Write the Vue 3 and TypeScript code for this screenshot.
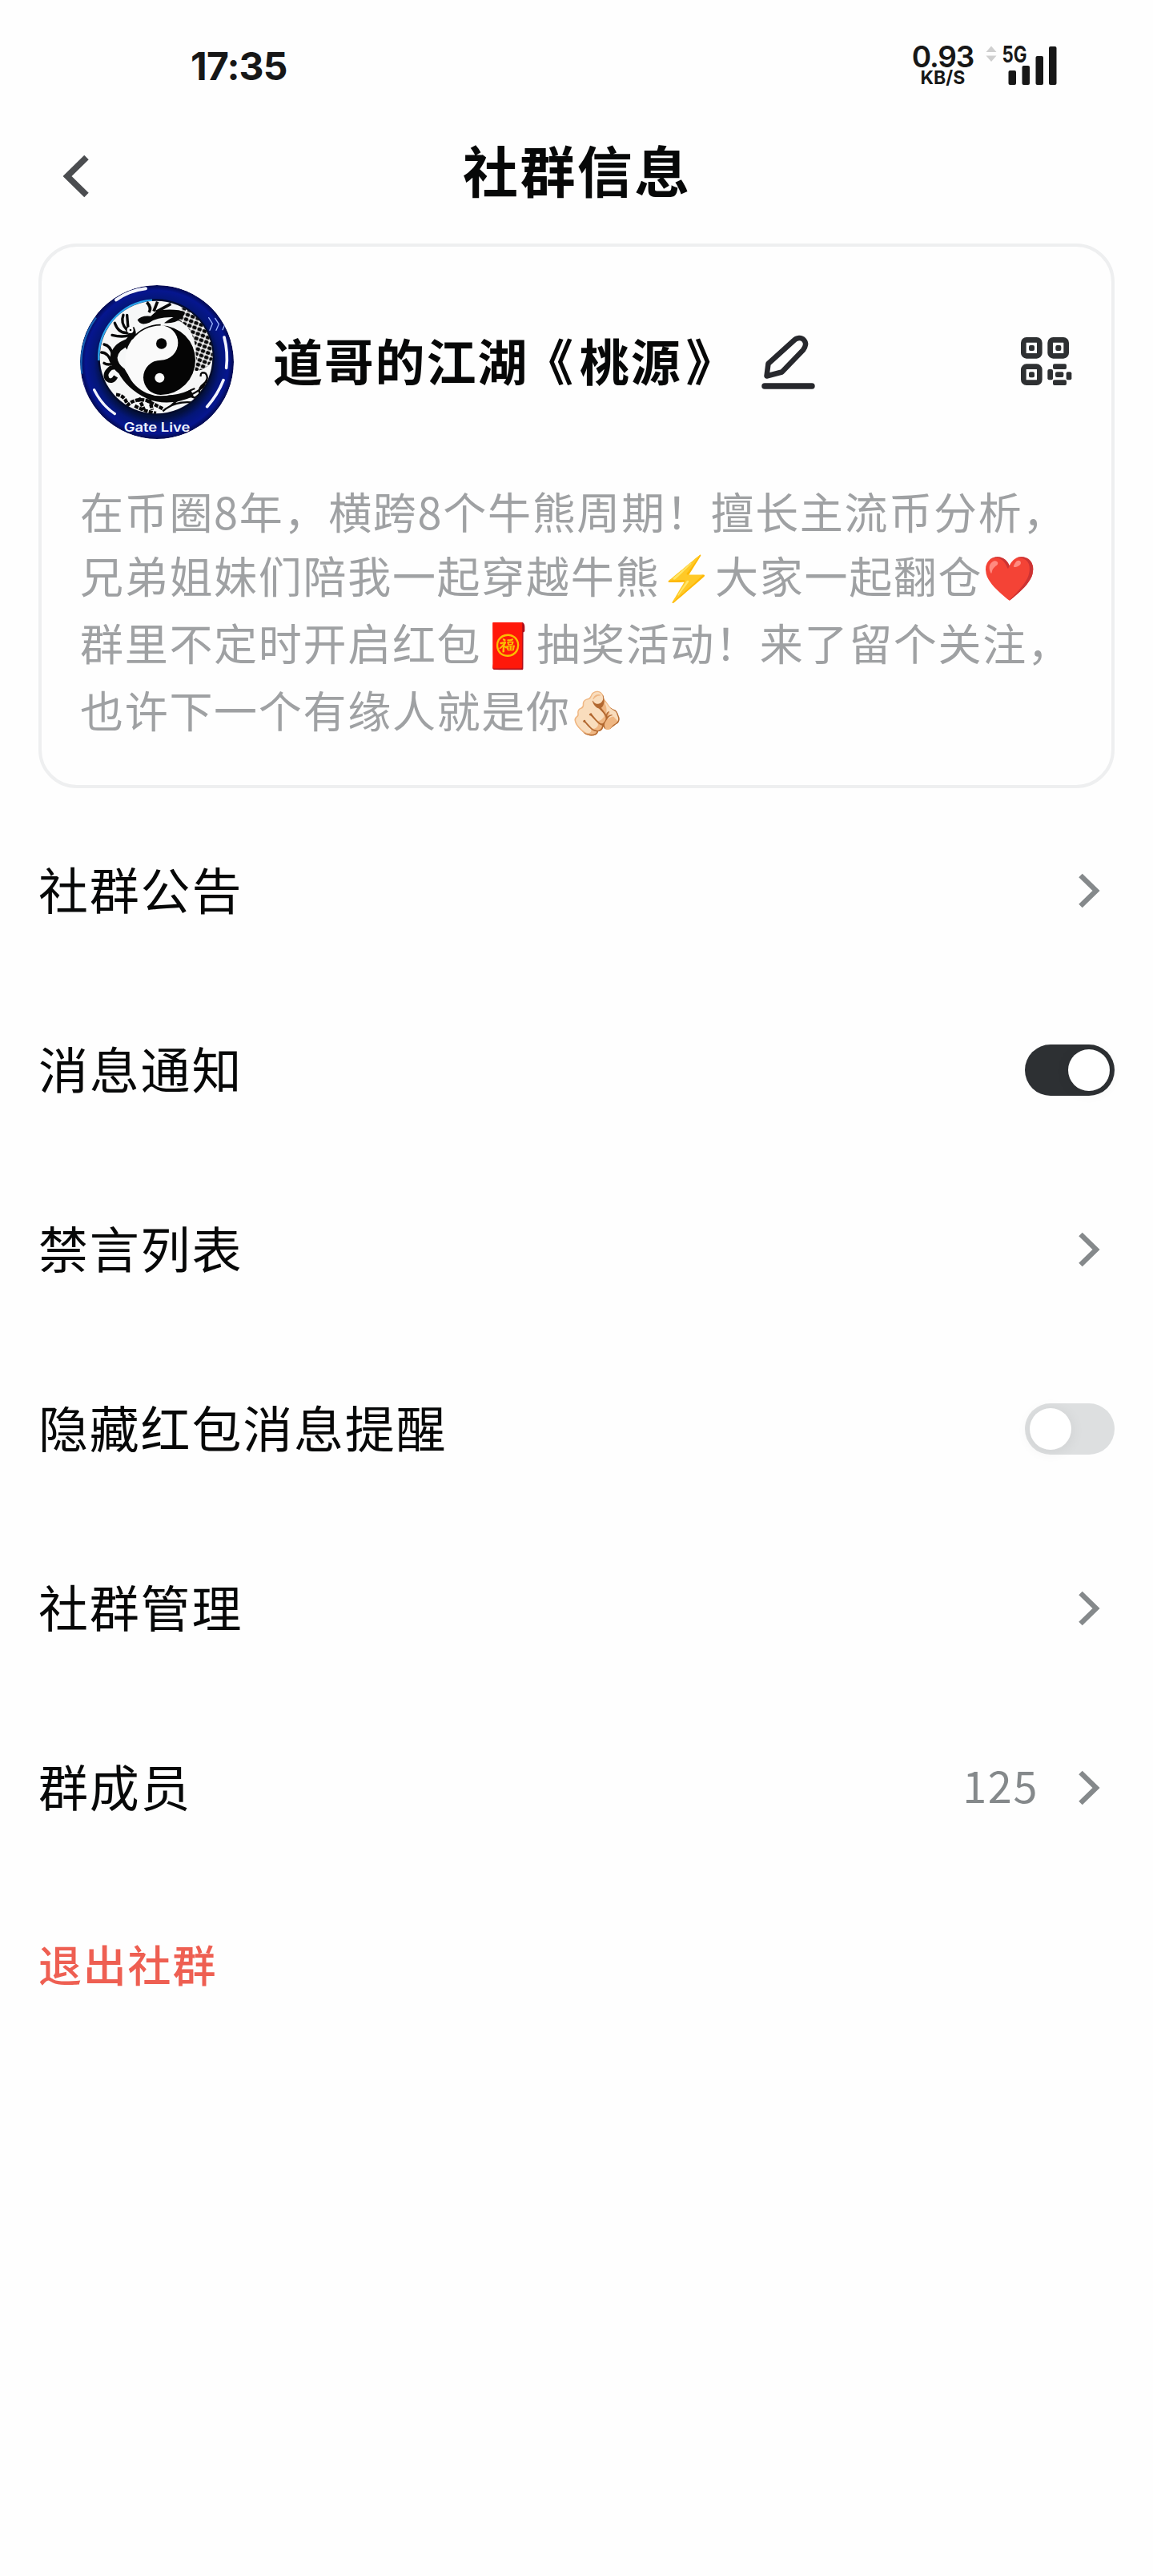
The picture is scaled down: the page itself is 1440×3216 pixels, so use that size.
<script setup lang="ts">
interface Row {
  label: string
  kind: 'link' | 'switch'
  on?: boolean
  value?: string
}

const rows: Row[] = [
  { label: '社群公告', kind: 'link' },
  { label: '消息通知', kind: 'switch', on: true },
  { label: '禁言列表', kind: 'link' },
  { label: '隐藏红包消息提醒', kind: 'switch', on: false },
  { label: '社群管理', kind: 'link' },
  { label: '群成员', kind: 'link', value: '125' },
]
</script>

<template>
  <main class="page">
    <div class="status">
      <span class="time">17:35</span>
      <div class="status-right">
        <div class="speed">
          <span class="speed-num">0.93</span>
          <span class="speed-unit">KB/S</span>
        </div>
        <svg class="signal" width="90" height="62" viewBox="1231 46 90 62">
          <path d="M1238 57.5l6.5 7.5h-13zM1238 77l6.5-7.5h-13z" fill="#cfcfcf" />
          <text x="1251.5" y="77.6" class="net" textLength="31" lengthAdjust="spacingAndGlyphs">5G</text>
          <g fill="#171717">
            <rect x="1259.5" y="88" width="9.5" height="18" rx="2" />
            <rect x="1276.5" y="82" width="9.5" height="24" rx="2" />
            <rect x="1293.5" y="70" width="9.5" height="36" rx="2" />
            <rect x="1310" y="58" width="9.5" height="48" rx="2" />
          </g>
        </svg>
      </div>
    </div>

    <header class="nav">
      <svg class="back" width="34" height="54" viewBox="0 0 34 54">
        <path d="M29 3.5L5 27L29 50.5" fill="none" stroke="#4b4d50" stroke-width="7.8" />
      </svg>
      <h1>社群信息</h1>
    </header>

    <section class="card">
      <div class="card-head">
        <svg class="avatar" width="192" height="192" viewBox="60 48 576 576">
          <defs>
            <radialGradient id="ring" cx="50%" cy="50%" r="50%">
              <stop offset="0.72" stop-color="#03103c" />
              <stop offset="0.82" stop-color="#041678" />
              <stop offset="0.93" stop-color="#06168f" />
              <stop offset="1" stop-color="#040a4e" />
            </radialGradient>
            <clipPath id="disc"><circle cx="345" cy="318" r="212" /></clipPath>
            <clipPath id="outer"><circle cx="348" cy="336" r="288" /></clipPath>
            <pattern id="scales" width="20" height="18" patternUnits="userSpaceOnUse" patternTransform="rotate(20)">
              <rect width="20" height="18" fill="#eee" />
              <rect x="2" y="2" width="16" height="14" rx="5" fill="#0a0a0a" />
            </pattern>
          </defs>
          <g clip-path="url(#outer)">
            <circle cx="348" cy="336" r="288" fill="url(#ring)" />
            <path d="M72 400Q100 540 200 590L150 600L60 480z" fill="#5a55b8" opacity=".45" />
            <path d="M67 380A288 288 0 0 1 120 170" fill="none" stroke="#1d77c8" stroke-width="7" opacity=".8" />
            <circle cx="345" cy="318" r="218" fill="#020b2c" />
            <path d="M130 330A216 216 0 0 1 330 104" fill="none" stroke="#2aa4ee" stroke-width="7" />
            <circle cx="345" cy="318" r="211" fill="#f6f7f7" />
            <g clip-path="url(#disc)">
              <path d="M440 130Q540 170 570 300L545 345Q520 370 488 370Q505 270 470 215Q445 185 425 180z" fill="url(#scales)" />
              <path d="M275 178Q290 160 325 164L345 146Q380 136 430 142Q465 150 440 170Q420 192 375 190Q395 174 410 168Q350 166 320 188Q285 202 275 178z" fill="#080808" />
              <path d="M310 112Q330 132 318 150M350 110L336 146M400 118L345 148" fill="none" stroke="#080808" stroke-width="11" />
              <path d="M250 210Q265 238 240 262Q190 280 186 320Q188 350 216 370Q245 425 315 460Q390 492 480 452" fill="none" stroke="#080808" stroke-width="27" />
              <path d="M222 160Q210 190 236 216M190 190Q205 230 238 226M180 235Q220 245 245 235M236 160L240 210M225 262L238 284M248 250L258 270M150 270Q175 275 182 310M140 300Q165 300 178 338M150 340Q165 350 188 340" fill="none" stroke="#080808" stroke-width="10" stroke-linecap="round" />
              <path d="M208 368Q205 350 175 358Q148 380 162 400Q180 415 194 390" fill="none" stroke="#080808" stroke-width="17" />
              <circle cx="248" cy="216" r="12" fill="#fff" />
              <circle cx="249" cy="216" r="4" fill="#080808" />
              <path d="M195 458Q225 460 235 490M235 500Q265 470 310 480L372 512M265 500Q300 520 345 528M280 470L300 515M320 475L330 515" fill="none" stroke="#080808" stroke-width="13" stroke-dasharray="15 4" />
              <path d="M400 500Q450 450 490 470Q520 450 540 405M370 520Q420 475 500 490M390 470Q470 480 530 420M512 390Q510 370 530 378Q548 400 515 425Q500 440 512 465M440 470Q460 445 490 435" fill="none" stroke="#080808" stroke-width="7" />
              <circle cx="362" cy="330" r="133" fill="#fafafa" />
              <path d="M255 250A133 133 0 0 1 362 197" fill="none" stroke="#080808" stroke-width="5" />
              <path d="M362 199A130 130 0 0 1 362 459A65 65 0 0 1 362 329A65 65 0 0 0 362 199z" fill="#050505" />
              <circle cx="365" cy="267" r="20" fill="#050505" />
              <circle cx="358" cy="395" r="18" fill="#fafafa" />
            </g>
            <g fill="none" stroke="#f2f4ff" stroke-linecap="round">
              <path d="M195 103Q245 68 306 61" stroke-width="12" />
              <path d="M600 243Q615 300 608 358" stroke-width="11" />
              <path d="M597 404Q575 460 536 503" stroke-width="11" />
              <path d="M113 440Q142 498 190 530" stroke-width="10" />
              <path d="M542 170L556 192L546 217M566 172L580 194L570 217M590 174L602 196L594 215" stroke-width="4" stroke="#9db5ff" />
            </g>
            <text x="224" y="598" class="gate" textLength="248" lengthAdjust="spacingAndGlyphs">Gate Live</text>
          </g>
        </svg>
        <h2>道哥的江湖<span class="open">《</span>桃源<span class="close">》</span></h2>
        <svg class="edit" width="70" height="72" viewBox="950 416 70 72" fill="none" stroke="#27282d" stroke-linejoin="round" stroke-linecap="round">
          <path d="M957.5 469.5L959.5 454L991 425.5C995 421 1001 421 1004 424.5C1007.5 428 1006 433 1003 437L976.5 464.5z" stroke-width="6.5" />
          <path d="M955 482H1014" stroke-width="7.5" />
        </svg>
        <svg class="qr" width="64" height="62" viewBox="102 96 192 186">
          <g fill="none" stroke="#2e3032" stroke-width="20">
            <rect x="112" y="106" width="60" height="60" rx="11" />
            <rect x="212" y="106" width="60" height="60" rx="11" />
            <rect x="112" y="206" width="60" height="60" rx="11" />
          </g>
          <g fill="#2e3032">
            <rect x="132" y="126" width="21" height="21" rx="6" />
            <rect x="232" y="126" width="21" height="21" rx="6" />
            <rect x="132" y="226" width="21" height="21" rx="6" />
            <rect x="222" y="196" width="51" height="20" rx="6" />
            <rect x="222" y="256" width="51" height="20" rx="6" />
            <rect x="202" y="216" width="20" height="40" rx="6" />
            <rect x="272" y="226" width="20" height="30" rx="6" />
            <rect x="231" y="226" width="31" height="20" rx="6" />
          </g>
        </svg>
      </div>

      <div class="desc">
        <p>在币圈8年，横跨8个牛熊周期！擅长主流币分析，</p>
        <p>兄弟姐妹们陪我一起穿越牛熊⚡大家一起翻仓❤️</p>
        <p class="tall">群里不定时开启红包🧧抽奖活动！来了留个关注，</p>
        <p>也许下一个有缘人就是你🫵🏻</p>
      </div>
    </section>

    <section class="list">
      <div v-for="row in rows" :key="row.label" class="row">
        <span class="label">{{ row.label }}</span>
        <div v-if="row.kind === 'link'" class="end">
          <span v-if="row.value" class="value">{{ row.value }}</span>
          <svg width="28" height="44" viewBox="0 0 28 44">
            <path d="M3.5 3L23 22L3.5 41" fill="none" stroke="#85898b" stroke-width="6.4" />
          </svg>
        </div>
        <span v-else class="switch" :class="{ on: row.on }"><i></i></span>
      </div>
      <div class="row">
        <span class="leave">退出社群</span>
      </div>
    </section>
  </main>
</template>

<style>
body {
  background: #fefefe;
}
</style>

<style scoped>
.page {
  width: 1440px;
  height: 3216px;
  box-sizing: border-box;
  overflow: hidden;
  background: #fefefe;
  font-family: "Noto Sans CJK SC", "Noto Color Emoji", sans-serif;
  color: #070808;
}
h1, h2, p {
  margin: 0;
  font-weight: inherit;
}
svg {
  display: block;
  flex: none;
}
.status {
  height: 160px;
  box-sizing: border-box;
  padding: 53px 119px 0 238px;
  display: flex;
  justify-content: space-between;
  align-items: flex-start;
  font-family: Inter, sans-serif;
  font-weight: 700;
  color: #171717;
}
.time {
  font-size: 48px;
  line-height: 60px;
  letter-spacing: -0.8px;
}
.status-right {
  display: flex;
  gap: 15px;
  padding-top: 3px;
}
.signal {
  margin-top: -10px;
}
.speed {
  display: flex;
  flex-direction: column;
  align-items: center;
}
.speed-num {
  font-size: 37px;
  font-weight: 600;
  line-height: 30px;
  letter-spacing: -1.2px;
}
.speed-unit {
  font-size: 23px;
  line-height: 22px;
}
.net {
  font: 700 28px Inter, sans-serif;
  fill: #171717;
}
.nav {
  height: 144px;
  display: flex;
  align-items: flex-start;
  padding-left: 79px;
}
.back {
  margin-top: 33px;
}
h1 {
  margin-left: 465px;
  font-size: 69px;
  line-height: 102px;
  font-weight: 700;
  letter-spacing: 2.4px;
}
.card {
  height: 680px;
  box-sizing: border-box;
  margin: 0 48px;
  border: 4px solid #eeeff0;
  border-radius: 48px;
  padding: 48px;
}
.card-head {
  display: flex;
  align-items: center;
  height: 192px;
}
h2 {
  width: 574px;
  margin-left: 49px;
  padding-bottom: 7px;
  font-size: 62px;
  line-height: 90px;
  font-weight: 700;
  letter-spacing: 1.8px;
  white-space: nowrap;
}
.open,
.close {
  position: relative;
}
.open {
  left: -6px;
}
.close {
  left: 5px;
}
.edit {
  margin-left: 35px;
}
.qr {
  margin-left: auto;
  margin-right: 1px;
}
.gate {
  font: 600 46px Inter, sans-serif;
  fill: #eef3ff;
}
.desc {
  margin-top: 50px;
  font-size: 54px;
  letter-spacing: 1.7px;
  color: #9fa1a3;
}
.desc p {
  height: 80px;
  line-height: 80px;
  white-space: nowrap;
}
.desc .tall {
  height: 88px;
  line-height: 88px;
}
.list {
  padding: 16px 48px 0;
}
.row {
  height: 224px;
  display: flex;
  align-items: center;
  justify-content: space-between;
}
.label {
  margin-bottom: 7px;
  font-size: 62px;
  line-height: 90px;
  letter-spacing: 1.8px;
}
.end {
  display: flex;
  align-items: center;
  gap: 49px;
  padding-right: 18px;
}
.value {
  margin-bottom: 8px;
  font-size: 54px;
  line-height: 80px;
  letter-spacing: 1.6px;
  color: #85898b;
}
.switch {
  width: 112px;
  height: 64px;
  box-sizing: border-box;
  padding: 6px;
  border-radius: 32px;
  background: #dddfe0;
  display: flex;
}
.switch i {
  width: 52px;
  height: 52px;
  border-radius: 50%;
  background: #fff;
  box-shadow: 0 2px 18px rgba(0, 0, 0, 0.07);
}
.switch.on {
  background: #2d3033;
  justify-content: flex-end;
}
.leave {
  margin-bottom: 8px;
  font-size: 54px;
  line-height: 80px;
  font-weight: 500;
  letter-spacing: 1.8px;
  color: #ee5f52;
}
</style>
